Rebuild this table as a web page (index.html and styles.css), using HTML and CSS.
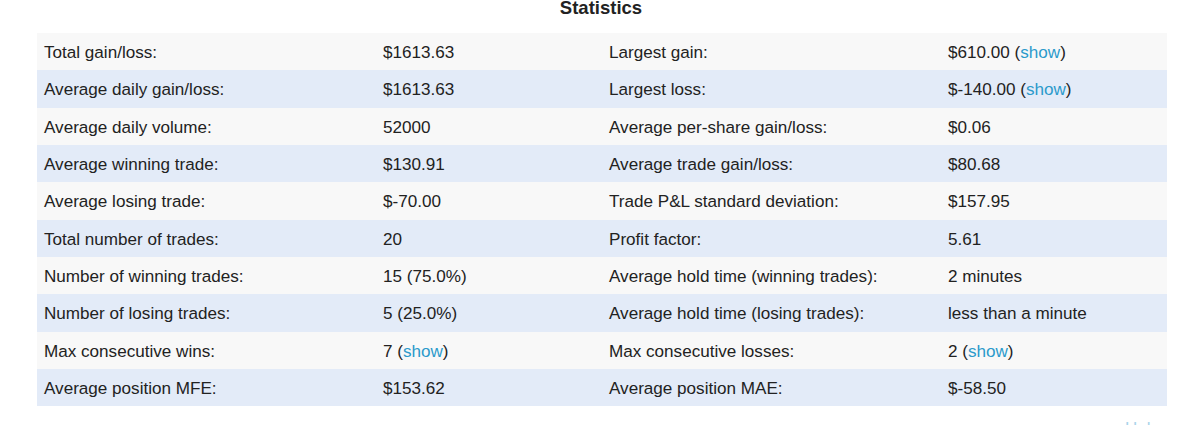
FILE: index.html
```
<!DOCTYPE html>
<html>
<head>
<meta charset="utf-8">
<link rel="stylesheet" href="styles.css">
</head>
<body>
<div class="title">Statistics</div>
<table class="stats">
  <colgroup>
    <col class="c-label"><col class="c-value"><col class="c-label"><col class="c-value">
  </colgroup>
  <tbody>
    <tr><td>Total gain/loss:</td><td>$1613.63</td><td>Largest gain:</td><td>$610.00 (<a href="#">show</a>)</td></tr>
    <tr><td>Average daily gain/loss:</td><td>$1613.63</td><td>Largest loss:</td><td>$-140.00 (<a href="#">show</a>)</td></tr>
    <tr><td>Average daily volume:</td><td>52000</td><td>Average per-share gain/loss:</td><td>$0.06</td></tr>
    <tr><td>Average winning trade:</td><td>$130.91</td><td>Average trade gain/loss:</td><td>$80.68</td></tr>
    <tr><td>Average losing trade:</td><td>$-70.00</td><td>Trade P&amp;L standard deviation:</td><td>$157.95</td></tr>
    <tr><td>Total number of trades:</td><td>20</td><td>Profit factor:</td><td>5.61</td></tr>
    <tr><td>Number of winning trades:</td><td>15 (75.0%)</td><td>Average hold time (winning trades):</td><td>2 minutes</td></tr>
    <tr><td>Number of losing trades:</td><td>5 (25.0%)</td><td>Average hold time (losing trades):</td><td>less than a minute</td></tr>
    <tr><td>Max consecutive wins:</td><td>7 (<a href="#">show</a>)</td><td>Max consecutive losses:</td><td>2 (<a href="#">show</a>)</td></tr>
    <tr><td>Average position MFE:</td><td>$153.62</td><td>Average position MAE:</td><td>$-58.50</td></tr>
  </tbody>
</table>
<div class="more"><a href="#">Help</a></div>
</body>
</html>
```
FILE: styles.css
```
html, body {
  margin: 0;
  padding: 0;
  background: #ffffff;
  font-family: "Liberation Sans", Arial, Helvetica, sans-serif;
  color: #222222;
  overflow: hidden;
}
.title {
  text-align: center;
  font-weight: bold;
  font-size: 18.5px;
  line-height: 16px;
  margin: 0 0 17px 0;
  padding-left: 2px;
}
.stats {
  margin-left: 37px;
  width: 1129px;
  border-collapse: collapse;
  table-layout: fixed;
  font-size: 17.1px;
}
.c-label { width: 339px; }
.c-value { width: 226px; }
.stats td {
  padding: 3px 7px 0 7px;
  line-height: 34.35px;
  white-space: nowrap;
  vertical-align: top;
}
.stats tr:nth-child(odd) { background: #f8f8f8; }
.stats tr:nth-child(even) { background: #e3ebf8; }
a {
  color: #2b9acb;
  text-decoration: none;
}
.more {
  text-align: right;
  padding-right: 40px;
  margin-top: 12.6px;
  font-size: 17px;
  line-height: 20px;
}
.more a { color: #a9d3ea; }
```
